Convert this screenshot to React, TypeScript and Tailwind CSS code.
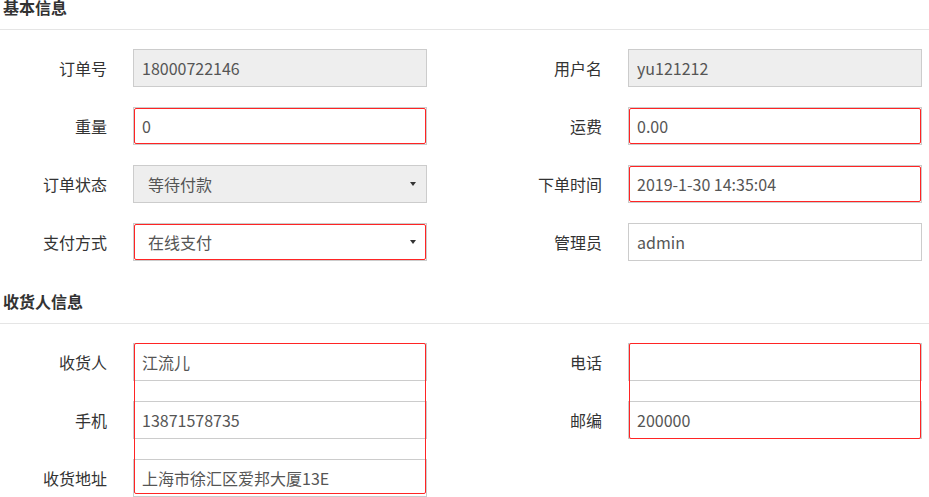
import React from 'react';

type Field = {
  label: string;
  value: string;
  kind?: 'disabled' | 'error' | 'normal';
  select?: boolean;
};

const basicLeft: Field[] = [
  { label: '订单号', value: '18000722146', kind: 'disabled' },
  { label: '重量', value: '0', kind: 'error' },
  { label: '订单状态', value: '等待付款', kind: 'disabled', select: true },
  { label: '支付方式', value: '在线支付', kind: 'error', select: true },
];

const basicRight: Field[] = [
  { label: '用户名', value: 'yu121212', kind: 'disabled' },
  { label: '运费', value: '0.00', kind: 'error' },
  { label: '下单时间', value: '2019-1-30 14:35:04', kind: 'error' },
  { label: '管理员', value: 'admin', kind: 'normal' },
];

const shipLeft: Field[] = [
  { label: '收货人', value: '江流儿' },
  { label: '手机', value: '13871578735' },
  { label: '收货地址', value: '上海市徐汇区爱邦大厦13E' },
];

const shipRight: Field[] = [
  { label: '电话', value: '' },
  { label: '邮编', value: '200000' },
];

const Box: React.FC<{ f: Field }> = ({ f }) => {
  const bg = f.kind === 'disabled' ? 'bg-[#eeeeee]' : 'bg-white';
  return (
    <div className={`relative h-[38px] w-[294px] border border-[#cccccc] ${bg} flex items-center ${f.select ? 'pl-[14px] pr-[10px]' : 'px-[8px]'} text-[#555555]`}>
      <span className="flex-1 truncate">{f.value}</span>
      {f.select && <span className="w-0 h-0 border-x-[3px] border-t-[4px] border-x-transparent border-t-[#333333]" />}
      {f.kind === 'error' && <span className="absolute inset-0 border border-[#ff2424] rounded-[2px] pointer-events-none" />}
    </div>
  );
};

const Row: React.FC<{ f: Field }> = ({ f }) => (
  <div className="flex items-center gap-[26px]">
    <div className="w-[107px] text-right text-[#333333]">{f.label}</div>
    <Box f={f} />
  </div>
);

const BasicCol: React.FC<{ items: Field[] }> = ({ items }) => (
  <div className="flex flex-col gap-[20px]">
    {items.map(f => <Row key={f.label} f={f} />)}
  </div>
);

const ShipCol: React.FC<{ items: Field[]; inset: string }> = ({ items, inset }) => (
  <div className="flex items-start gap-[26px]">
    <div className="w-[107px] flex flex-col gap-[20px] text-right text-[#333333]">
      {items.map(f => <div key={f.label} className="h-[38px] leading-[38px]">{f.label}</div>)}
    </div>
    <div className="relative flex flex-col gap-[20px]">
      {items.map(f => (
        <div key={f.label} className="h-[38px] w-[294px] border border-[#cccccc] bg-white flex items-center px-[8px] text-[#555555]">{f.value}</div>
      ))}
      <div className={`absolute top-0 left-px right-px ${inset} border border-[#ff2424] rounded-[2px] pointer-events-none`} />
    </div>
  </div>
);

const Heading: React.FC<{ title: string; className?: string }> = ({ title, className }) => (
  <div className={`pl-[3px] pb-[12px] leading-[20px] font-bold text-[#333333] border-b border-[#e5e5e5] ${className || ''}`}>{title}</div>
);

export default function App() {
  return (
    <div className="w-[929px] h-[497px] overflow-hidden bg-white text-[16px] font-['Noto_Sans_CJK_SC','Noto_Sans',sans-serif]">
      <Heading title="基本信息" className="-mt-[3px]" />
      <div className="grid grid-cols-[495px_1fr] items-start mt-[19px]">
        <BasicCol items={basicLeft} />
        <BasicCol items={basicRight} />
      </div>
      <Heading title="收货人信息" className="mt-[30px]" />
      <div className="grid grid-cols-[495px_1fr] items-start mt-[19px]">
        <ShipCol items={shipLeft} inset="bottom-[3px]" />
        <ShipCol items={shipRight} inset="bottom-0" />
      </div>
    </div>
  );
}
